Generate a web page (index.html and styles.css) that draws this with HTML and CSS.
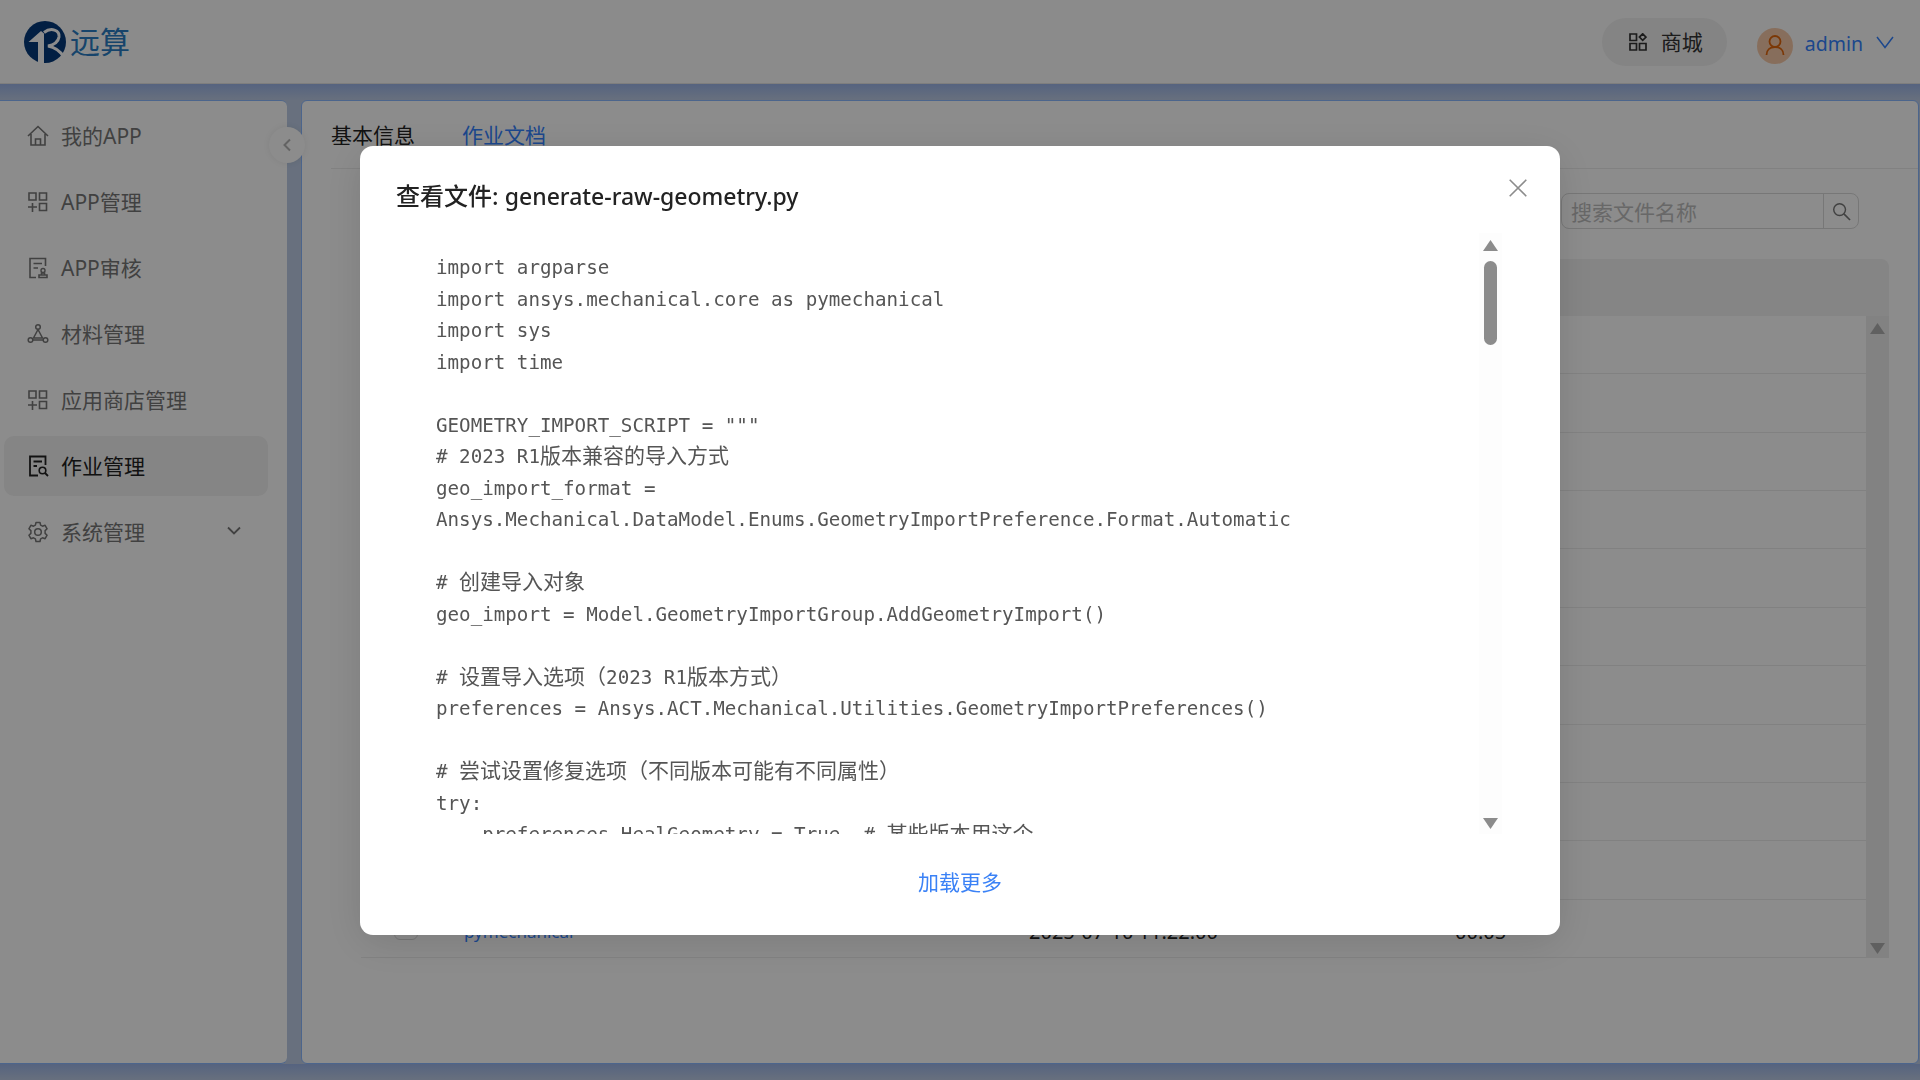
FILE: index.html
```html
<!DOCTYPE html>
<html lang="zh-CN">
<head>
<meta charset="utf-8">
<title>查看文件</title>
<link rel="stylesheet" href="styles.css">
</head>
<body>
<div class="app">
  <header class="topbar">
    <div class="brand">
      <svg class="brand-mark" viewBox="0 0 42 42"><circle cx="21" cy="21" r="21" fill="#05397a"/><path d="M4.500 21 17 10l3 2.500V42h-6V21z" fill="#fff"/><path d="M20 11.500C27 6 36 9 35 16c-1 6-6 8-11 9 6 1 12 5 16 11" fill="none" stroke="#fff" stroke-width="3"/></svg>
      <span class="brand-name">远算</span>
    </div>
    <div class="top-actions">
      <button class="store-btn">
        <svg class="store-icon" viewBox="0 0 18 18"><path d="M1 1h6.500v6.500H1zM1 10.500h6.500V17H1zM10.500 10.500H17V17h-6.500zM13.700 .8l3.300 3.300-3.300 3.300-3.300-3.300z" fill="none" stroke="currentColor" stroke-width="1.700"/></svg>
        <span>商城</span>
      </button>
      <div class="avatar">
        <svg viewBox="0 0 36 36"><circle cx="18" cy="13.500" r="5.500" fill="none" stroke="#e0650a" stroke-width="1.800"/><path d="M9.500 27c0-5 3.500-8 8.500-8s8.500 3 8.500 8" fill="none" stroke="#e0650a" stroke-width="1.800"/></svg>
      </div>
      <span class="user-name">admin</span>
      <svg class="user-caret" viewBox="0 0 18 13"><path d="M1 1l8 10.500L17 1" fill="none" stroke="currentColor" stroke-width="1.500"/></svg>
    </div>
  </header>
  <div class="workspace">
    <nav class="sidebar">
      <a class="nav-item">
        <svg class="nav-icon" viewBox="0 0 22 22"><path d="M1 11 11 1.500 21 11M4 9v11h14V9M8.500 20v-6h5v6" fill="none" stroke="currentColor" stroke-width="1.600"/></svg>
        <span>我的APP</span>
      </a>
      <a class="nav-item">
        <svg class="nav-icon" viewBox="0 0 22 22"><path d="M2 2h7v7H2zM12.500 2h7v7h-7zM12.500 12.500h7v7h-7zM1 16h9M5.500 12v9" fill="none" stroke="currentColor" stroke-width="1.600"/></svg>
        <span>APP管理</span>
      </a>
      <a class="nav-item">
        <svg class="nav-icon" viewBox="0 0 22 22"><path d="M18.500 9V1.500H3v19h6M6.500 6.500h8.500M6.500 11H11M12 20.500h8V18h-8zM14.500 18v-2h3v2" fill="none" stroke="currentColor" stroke-width="1.600"/><circle cx="16" cy="13.500" r="2" fill="none" stroke="currentColor" stroke-width="1.400"/></svg>
        <span>APP审核</span>
      </a>
      <a class="nav-item">
        <svg class="nav-icon" viewBox="0 0 22 22"><g fill="none" stroke="currentColor" stroke-width="1.500"><circle cx="11" cy="4" r="2.300"/><circle cx="3.500" cy="17" r="2.300"/><circle cx="18.500" cy="17" r="2.300"/><path d="M11 6.500 6.500 15h9zM5.800 17h10.400"/></g></svg>
        <span>材料管理</span>
      </a>
      <a class="nav-item">
        <svg class="nav-icon" viewBox="0 0 22 22"><path d="M2 2h7v7H2zM12.500 2h7v7h-7zM12.500 12.500h7v7h-7zM1 16h9M5.500 12v9" fill="none" stroke="currentColor" stroke-width="1.600"/></svg>
        <span>应用商店管理</span>
      </a>
      <a class="nav-item is-active">
        <svg class="nav-icon" viewBox="0 0 22 22"><path d="M18.500 10V1.500H3v19h8M6.500 6.500h8.500M6.500 11H10" fill="none" stroke="currentColor" stroke-width="1.800"/><circle cx="15.500" cy="15.500" r="3.300" fill="none" stroke="currentColor" stroke-width="1.600"/><path d="M18 18l3 3" stroke="currentColor" stroke-width="1.800"/></svg>
        <span>作业管理</span>
      </a>
      <a class="nav-item">
        <svg class="nav-icon" viewBox="0 0 22 22"><path d="M9 1.500h4l.6 2.700 1.900 1 2.600-.9 2 3.500-2 1.800v2.800l2 1.800-2 3.500-2.600-.9-1.900 1-.6 2.700H9l-.6-2.700-1.900-1-2.600.9-2-3.500 2-1.800V9.600l-2-1.800 2-3.500 2.600.9 1.900-1z" fill="none" stroke="currentColor" stroke-width="1.500" stroke-linejoin="round"/><circle cx="11" cy="11" r="3.300" fill="none" stroke="currentColor" stroke-width="1.500"/></svg>
        <span>系统管理</span>
        <svg class="nav-caret" viewBox="0 0 14 9"><path d="M1 1.500l6 6 6-6" fill="none" stroke="currentColor" stroke-width="1.800"/></svg>
      </a>
    </nav>
    <main class="content">
      <div class="tabs">
        <span class="tab">基本信息</span>
        <span class="tab is-current">作业文档</span>
      </div>
      <div class="search">
        <span class="search-text">搜索文件名称</span>
        <span class="search-btn">
          <svg viewBox="0 0 20 20"><circle cx="8" cy="8" r="6.200" fill="none" stroke="currentColor" stroke-width="1.500"/><path d="M12.500 12.500 19 19" stroke="currentColor" stroke-width="1.700"/></svg>
        </span>
      </div>
      <div class="table">
        <div class="table-head"></div>
        <div class="table-body">
          <div class="rows">
            <div class="row"></div><div class="row"></div><div class="row"></div><div class="row"></div>
            <div class="row"></div><div class="row"></div><div class="row"></div><div class="row"></div>
            <div class="row"></div><div class="row"></div>
            <div class="row row-file">
              <span class="cell-check"><i class="check"></i></span>
              <span class="cell-name">pymechanical</span>
              <span class="cell-text">2025-07-10 11:22:00</span>
              <span class="cell-text">00:05</span>
            </div>
          </div>
          <div class="table-scroll">
            <i class="arrow-up"></i>
            <i class="arrow-down"></i>
          </div>
        </div>
      </div>
    </main>
    <button class="collapse" aria-label="收起">
      <svg viewBox="0 0 10 14"><path d="M8 1.500 2.500 7 8 12.500" fill="none" stroke="currentColor" stroke-width="2"/></svg>
    </button>
  </div>
</div>

<div class="mask">
  <section class="modal">
    <div class="modal-head">
      <h2 class="modal-title">查看文件: <span class="title-file">generate-raw-geometry.py</span></h2>
      <svg class="modal-close" viewBox="0 0 18 18"><path d="M.7.7l16.600 16.600M17.300.7.700 17.300" fill="none" stroke="currentColor" stroke-width="1.600"/></svg>
    </div>
    <div class="modal-body">
      <div class="code"><div>import argparse</div><div>import ansys.mechanical.core as pymechanical</div><div>import sys</div><div>import time</div><div>&nbsp;</div><div>GEOMETRY_IMPORT_SCRIPT = """</div><div># 2023 R1<span class="zh">版本兼容的导入方式</span></div><div>geo_import_format =</div><div>Ansys.Mechanical.DataModel.Enums.GeometryImportPreference.Format.Automatic</div><div>&nbsp;</div><div># <span class="zh">创建导入对象</span></div><div>geo_import = Model.GeometryImportGroup.AddGeometryImport()</div><div>&nbsp;</div><div># <span class="zh">设置导入选项（</span>2023 R1<span class="zh">版本方式）</span></div><div>preferences = Ansys.ACT.Mechanical.Utilities.GeometryImportPreferences()</div><div>&nbsp;</div><div># <span class="zh">尝试设置修复选项（不同版本可能有不同属性）</span></div><div>try:</div><div>    preferences.HealGeometry = True  # <span class="zh">某些版本用这个</span></div></div>
      <div class="code-scroll">
        <i class="arrow-up"></i>
        <i class="thumb"></i>
        <i class="arrow-down"></i>
      </div>
    </div>
    <div class="modal-foot"><a class="load-more">加载更多</a></div>
  </section>
</div>
</body>
</html>
```
FILE: styles.css
```css
* { box-sizing: border-box; }
html, body { margin: 0; height: 100%; overflow: hidden; }
body {
  font-family: "Noto Sans", "Noto Sans CJK SC", sans-serif;
  color: #333;
}
i { display: block; }

.app { display: flex; flex-direction: column; height: 1080px; }

.topbar {
  flex: 0 0 84px;
  display: flex;
  align-items: center;
  justify-content: space-between;
  padding: 0 26px 0 24px;
  background: #fdfdfd;
  border-bottom: 1px solid #e6e6e6;
}
.brand { display: flex; align-items: center; gap: 4px; }
.brand-mark { width: 42px; height: 42px; }
.brand-name {
  font: 400 30px/1 "Noto Sans CJK SC", sans-serif;
  color: #2a7dc4;
  margin-top: -4px;
}
.top-actions { display: flex; align-items: center; }
.store-btn {
  display: flex;
  align-items: center;
  gap: 14px;
  width: 125px;
  height: 48px;
  padding: 0 0 0 27px;
  margin-right: 30px;
  border: 0;
  border-radius: 24px;
  background: #f1f1f1;
  color: #333;
  font: 400 21px/1 "Noto Sans CJK SC", sans-serif;
}
.store-icon { width: 18px; height: 18px; }
.avatar {
  width: 36px;
  height: 36px;
  margin: 8px 12px 0 0;
  border-radius: 50%;
  background: #f6c9a8;
}
.avatar svg { display: block; width: 36px; height: 36px; }
.user-name {
  font-size: 19.500px;
  color: #3482ff;
  margin-top: 3px;
}
.user-caret { width: 18px; height: 13px; margin-left: 13px; color: #3482ff; margin-top: 2px; }

.workspace {
  position: relative;
  flex: 1;
  display: flex;
  gap: 14px;
  padding: 16px 1px 16px 0;
  background: linear-gradient(#9cb5e8, #bdcce5 16px, #bdcce5 calc(100% - 16px), #9cb5e8 calc(100% - 16px), #bdcce5 100%);
}
.sidebar {
  flex: 0 0 287px;
  display: flex;
  flex-direction: column;
  padding-top: 5px;
  background: #fff;
  border-top: 1px solid #8ab8ff;
  border-bottom: 1px solid #8ab8ff;
  border-top-right-radius: 6px;
  border-bottom-right-radius: 6px;
}
.nav-item {
  position: relative;
  display: flex;
  align-items: center;
  gap: 12px;
  height: 60px;
  margin: 0 19px 6px 4px;
  padding-left: 23px;
  border-radius: 10px;
  font: 400 21px/1 "Noto Sans", "Noto Sans CJK SC", sans-serif;
  color: #777;
}
.nav-icon { width: 22px; height: 22px; flex: none; }
.nav-item.is-active { background: #f2f2f2; color: #222; }
.nav-caret { position: absolute; left: 223px; top: 24px; width: 14px; height: 9px; }
.collapse {
  position: absolute;
  left: 269px;
  top: 43px;
  width: 36px;
  height: 36px;
  padding: 0;
  border: 0;
  border-radius: 50%;
  background: #fff;
  color: #b5b5b5;
  box-shadow: 0 0 6px rgba(0, 0, 0, .08);
  display: flex;
  align-items: center;
  justify-content: center;
}
.collapse svg { width: 10px; height: 14px; }

.content {
  flex: 1;
  min-width: 0;
  display: flex;
  flex-direction: column;
  background: #fff;
  border: 1px solid #8ab8ff;
  border-radius: 6px;
}
.tabs {
  flex: 0 0 68px;
  display: flex;
  align-items: center;
  gap: 47px;
  margin-left: 29px;
  border-bottom: 1px solid #ececec;
  font: 400 21px/1 "Noto Sans CJK SC", sans-serif;
}
.tab { color: #222; }
.tab.is-current { color: #3482ff; }
.search {
  display: flex;
  align-self: flex-end;
  width: 298px;
  height: 36px;
  margin: 24px 59px 0 0;
  border: 1px solid #d9d9d9;
  border-radius: 8px;
  font: 400 21px/34px "Noto Sans CJK SC", sans-serif;
}
.search-text { flex: 1; padding-left: 9px; color: #bdbdbd; }
.search-btn {
  flex: 0 0 35px;
  display: flex;
  align-items: center;
  justify-content: center;
  border-left: 1px solid #d9d9d9;
  color: #777;
}
.search-btn svg { width: 19px; height: 19px; }
.table { margin: 30px 29px 0 59px; }
.table-head { height: 57px; background: #f2f2f2; border-radius: 8px 8px 0 0; }
.table-body { display: flex; height: 642px; }
.rows { flex: 1; display: grid; grid-template-rows: repeat(11, 1fr); }
.row { border-bottom: 1px solid #ececec; }
.row-file {
  display: grid;
  grid-template-columns: 103px 565px 426px 1fr;
  align-items: center;
  color: #222;
}
.cell-check { padding-left: 33px; }
.check { width: 24px; height: 24px; border: 1px solid #d9d9d9; border-radius: 6px; }
.cell-name { padding-top: 6px; font-size: 17px; color: #3482ff; }
.cell-text { padding-top: 6px; font-size: 20px; }
.table-scroll {
  flex: 0 0 23px;
  display: flex;
  flex-direction: column;
  justify-content: space-between;
  align-items: center;
  padding: 7px 0 4px;
  background: #ededed;
  color: #b0b0b0;
}
.arrow-up, .arrow-down { width: 15px; height: 11px; background: currentColor; }
.arrow-up { clip-path: polygon(50% 0, 100% 100%, 0 100%); }
.arrow-down { clip-path: polygon(0 0, 100% 0, 50% 100%); }

.mask {
  position: fixed;
  inset: 0;
  display: flex;
  justify-content: center;
  align-items: flex-start;
  padding-top: 146px;
  background: rgba(0, 0, 0, .45);
}
.modal {
  display: flex;
  flex-direction: column;
  width: 1200px;
  height: 789px;
  background: #fff;
  border-radius: 13px;
  box-shadow: 0 8px 40px rgba(0, 0, 0, .12);
}
.modal-head { position: relative; flex: 0 0 87px; padding: 32px 0 0 36px; }
.modal-title {
  margin: 0;
  font: 500 24px/36px "Noto Sans", "Noto Sans CJK SC", sans-serif;
  color: #222;
}
.title-file { font-size: 23px; }
.modal-close { position: absolute; left: 1149px; top: 33px; width: 18px; height: 18px; color: #8c8c8c; }
.modal-body { flex: 0 0 601px; min-height: 0; display: flex; margin: 0 58px 0 76px; }
.code {
  flex: 1;
  min-width: 0;
  overflow: hidden;
  padding-top: 19px;
  white-space: pre;
  font: 400 19.2px/31.500px "DejaVu Sans Mono", monospace;
  color: #555;
}
.zh { font: 400 21px/1 "Noto Sans CJK SC", sans-serif; }
.code-scroll {
  position: relative;
  flex: 0 0 23px;
  display: flex;
  flex-direction: column;
  align-items: center;
  padding-top: 7px;
  background: #fdfdfd;
  color: #8c8c8c;
}
.code-scroll .arrow-down { margin-top: auto; margin-bottom: 5px; }
.thumb { width: 13px; height: 84px; margin-top: 10px; border-radius: 7px; background: #8c8c8c; }
.modal-foot { flex: 1; display: flex; justify-content: center; padding-top: 32px; }
.load-more { font: 400 21px/30px "Noto Sans CJK SC", sans-serif; color: #3b82f6; }
```
